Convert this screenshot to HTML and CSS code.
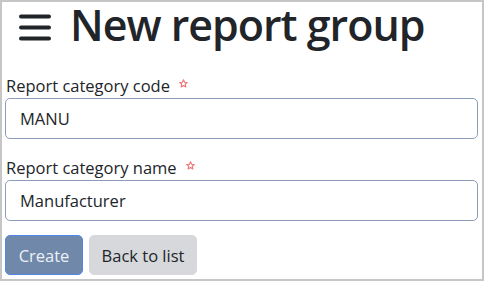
FILE: index.html
```html
<!DOCTYPE html>
<html>
<head>
<meta charset="utf-8">
<link rel="stylesheet" href="styles.css">
</head>
<body>
<div class="frame">
  <h1 class="title">
    <svg class="menu" width="32" height="27" viewBox="0 0 32 27" aria-hidden="true">
      <g stroke="#212529" stroke-width="4" stroke-linecap="round">
        <line x1="2" y1="2.5" x2="30" y2="2.5"/>
        <line x1="2" y1="13.5" x2="30" y2="13.5"/>
        <line x1="2" y1="24.5" x2="30" y2="24.5"/>
      </g>
    </svg>
    <span class="title-text">New report group</span>
  </h1>
  <form class="form">
    <div class="field">
      <label class="label">Report category code <svg class="star" width="9" height="9" viewBox="0 0 10 10"><path d="M5 0.8 L6.2 3.6 L9.2 3.8 L6.9 5.8 L7.6 8.8 L5 7.2 L2.4 8.8 L3.1 5.8 L0.8 3.8 L3.8 3.6 Z" fill="none" stroke="#f07070" stroke-width="1.2" stroke-linejoin="round"/></svg></label>
      <div class="input">MANU</div>
    </div>
    <div class="field">
      <label class="label">Report category name <svg class="star" width="9" height="9" viewBox="0 0 10 10"><path d="M5 0.8 L6.2 3.6 L9.2 3.8 L6.9 5.8 L7.6 8.8 L5 7.2 L2.4 8.8 L3.1 5.8 L0.8 3.8 L3.8 3.6 Z" fill="none" stroke="#f07070" stroke-width="1.2" stroke-linejoin="round"/></svg></label>
      <div class="input">Manufacturer</div>
    </div>
    <div class="actions">
      <button type="button" class="btn btn-primary">Create</button>
      <button type="button" class="btn btn-secondary">Back to list</button>
    </div>
  </form>
</div>
</body>
</html>
```
FILE: styles.css
```css
html, body {
  margin: 0;
  padding: 0;
  background: #ffffff;
}
body {
  font-family: "Open Sans", "Noto Sans", sans-serif;
  color: #212529;
}
.frame {
  box-sizing: border-box;
  width: 484px;
  height: 281px;
  border: 2px solid #c6c6c6;
  padding: 0 4px 0 3px;
}
.title {
  display: flex;
  align-items: flex-start;
  gap: 19px;
  margin: 0;
  padding: 0 0 10px 14px;
  font-size: 43px;
  font-weight: 600;
  line-height: 45px;
  letter-spacing: -1px;
}
.title-text {
  display: block;
}
.menu {
  flex: none;
  margin-top: 12px;
}
.form {
  margin-top: 17px;
}
.field + .field {
  margin-top: 17px;
}
.label {
  display: flex;
  align-items: flex-start;
  gap: 9px;
  padding-left: 1px;
  font-size: 16.5px;
  line-height: 24px;
  height: 24px;
}
.star {
  margin-top: 5px;
}
.input {
  box-sizing: border-box;
  height: 41px;
  border: 1px solid #8c9dbb;
  border-radius: 5px;
  padding: 0 14px;
  display: flex;
  align-items: center;
  font-size: 16.5px;
}
.actions {
  display: flex;
  gap: 6px;
  margin-top: 14px;
}
.btn {
  box-sizing: border-box;
  height: 40px;
  border-radius: 5px;
  font-family: inherit;
  font-size: 16.5px;
  padding: 0;
  cursor: pointer;
}
.btn-primary {
  width: 78px;
  background: #7088a9;
  border: 1.5px solid #4f86e8;
  color: #eef1f6;
}
.btn-secondary {
  width: 108px;
  background: #d6d8db;
  border: 1px solid #d6d8db;
  color: #212529;
}
```
